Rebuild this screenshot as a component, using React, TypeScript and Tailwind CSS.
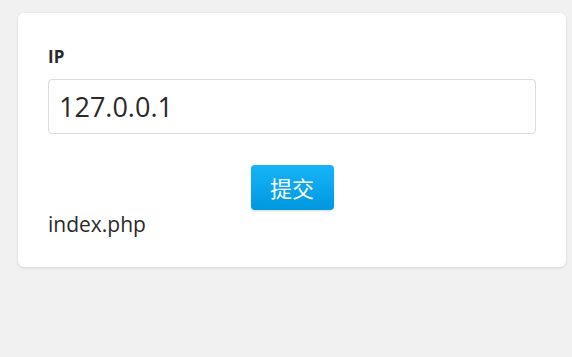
export default function App() {
  return (
    <div
      className="min-h-screen w-full bg-[#f1f1f1] pt-[13px] pl-[18px]"
      style={{ fontFamily: '"Open Sans", "Noto Sans CJK SC", sans-serif' }}
    >
      <div className="w-[548px] rounded-[6px] bg-white px-[30px] pt-[33px] pb-[29px] shadow-[0_1px_3px_rgba(0,0,0,0.12)]">
        {/* IP field */}
        <label className="block text-[17px] leading-[22px] font-bold text-[#2a2a2a]">IP</label>
        <input
          type="text"
          defaultValue="127.0.0.1"
          className="mt-[11px] block h-[55px] w-[488px] rounded-[4px] border border-[#dcdcdc] px-[10px] text-[27px] text-[#2a2a2a] outline-none"
        />

        {/* Submit */}
        <div className="mt-[31px] flex justify-center">
          <button
            type="button"
            className="h-[45px] w-[83px] rounded-[4px] bg-gradient-to-b from-[#16b4f8] to-[#0098df] text-[22px] leading-none text-white shadow-[0_1px_2px_rgba(0,0,0,0.15)]"
          >
            提交
          </button>
        </div>

        <div className="text-[21px] leading-[28px] text-[#2a2a2a]">index.php</div>
      </div>
    </div>
  );
}
